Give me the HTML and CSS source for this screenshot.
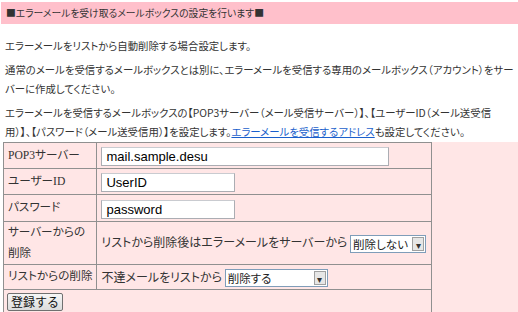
FILE: index.html
```html
<!DOCTYPE html>
<html lang="ja">
<head>
  <meta charset="UTF-8" />
  <title>エラーメール設定</title>
  <link rel="stylesheet" href="styles.css">
</head>
<body>

  <div class="title-bar">■エラーメールを受け取るメールボックスの設定を行います■</div>

  <p>エラーメールをリストから自動削除する場合設定します。</p>
  <p>
    通常のメールを受信するメールボックスとは別に、エラーメールを受信する専用のメールボックス（アカウント）をサー<br>
    バーに作成してください。
  </p>
  <p class="last">
    エラーメールを受信するメールボックスの【POP3サーバー（メール受信サーバー）】、【ユーザーID（メール送受信<br>
    用）】、【パスワード（メール送受信用）】を設定します。<a href="#">エラーメールを受信するアドレス</a>も設定してください。
  </p>

  <div class="form-box">
    <table class="setting">
      <tr>
        <th>POP3サーバー</th>
        <td><input type="text" class="input-long" value="mail.sample.desu"></td>
      </tr>
      <tr>
        <th>ユーザーID</th>
        <td><input type="text" class="input-short" value="UserID"></td>
      </tr>
      <tr>
        <th>パスワード</th>
        <td><input type="text" class="input-short" value="password"></td>
      </tr>
      <tr>
        <th class="two-line">サーバーからの<br>削除</th>
        <td>リストから削除後はエラーメールをサーバーから <span class="sel sel-small"><select><option>削除しない</option></select></span></td>
      </tr>
      <tr>
        <th>リストからの削除</th>
        <td>不達メールをリストから <span class="sel sel-wide"><select><option>削除する</option></select></span></td>
      </tr>
      <tr>
        <td colspan="2" class="submit-cell"><button class="button">登録する</button></td>
      </tr>
    </table>
  </div>

</body>
</html>
```

FILE: styles.css
```css
body {
  margin: 0;
  padding: 2px 0 0 1px;
  font-family: 'Noto Sans CJK JP', sans-serif;
  font-feature-settings: "palt";
  font-size: 10.4px;
  color: #333;
  background-color: #fff;
}
.title-bar {
  background-color: #ffc0cb;
  height: 22px;
  line-height: 22px;
  padding-left: 5px;
  margin-bottom: 12px;
  font-size: 9.8px;
}
p {
  margin: 0 0 5px;
  padding-left: 4px;
  line-height: 19px;
  white-space: nowrap;
}
p.last {
  margin-bottom: 1px;
}
a {
  color: #1a5fcc;
}
.form-box {
  background-color: #ffe6e6;
  margin: 0 0 0 2px;
}
.setting {
  width: 429px;
  border-collapse: collapse;
  border: 1px solid #909090;
  font-size: 12px;
}
.setting th,
.setting td {
  border: 1px solid #909090;
  padding: 2px 4px;
  line-height: 20px;
  text-align: left;
  font-weight: normal;
  vertical-align: middle;
  white-space: nowrap;
}
.setting th {
  width: 84px;
  font-family: 'Liberation Serif', 'Noto Sans CJK JP', serif;
  font-size: 11.6px;
}
.setting th.two-line {
  padding: 0 4px;
  line-height: 21px;
}
.setting input {
  font-family: 'Liberation Sans', Arial, sans-serif;
  font-size: 13px;
  height: 19px;
  padding: 0 4px;
  border: 1px solid #abadb3;
  border-top-color: #c9cbd0;
  box-sizing: border-box;
  vertical-align: middle;
}
.input-long {
  width: 288px;
}
.input-short {
  width: 134px;
}
.sel {
  position: relative;
  display: inline-block;
  vertical-align: middle;
}
.sel select {
  -webkit-appearance: none;
  appearance: none;
  font-family: 'Noto Sans CJK JP', sans-serif;
  font-feature-settings: "palt";
  font-size: 11.5px;
  height: 18px;
  padding: 0 2px;
  border: 1px solid #7f9db9;
  background: #fff;
  color: #222;
  display: block;
  box-sizing: border-box;
}
.sel::after {
  content: "▾";
  position: absolute;
  top: 2px;
  right: 2px;
  width: 12px;
  height: 14px;
  line-height: 14px;
  font-size: 10px;
  text-align: center;
  color: #333;
  background: #e6e6e6;
  border: 1px solid #a0a0a0;
  box-sizing: border-box;
}
.sel-small select {
  width: 76px;
}
.sel-wide select {
  width: 103px;
}
.submit-cell {
  padding: 1px 3px !important;
  line-height: 18px !important;
}
.button {
  font-family: 'Noto Sans CJK JP', sans-serif;
  font-size: 12px;
  padding: 0 3px;
  height: 18px;
  line-height: 16px;
  color: #111;
  background: linear-gradient(#f6f6f6, #dcdcdc);
  border: 1px solid #707070;
  border-radius: 2px;
  vertical-align: middle;
}
```
